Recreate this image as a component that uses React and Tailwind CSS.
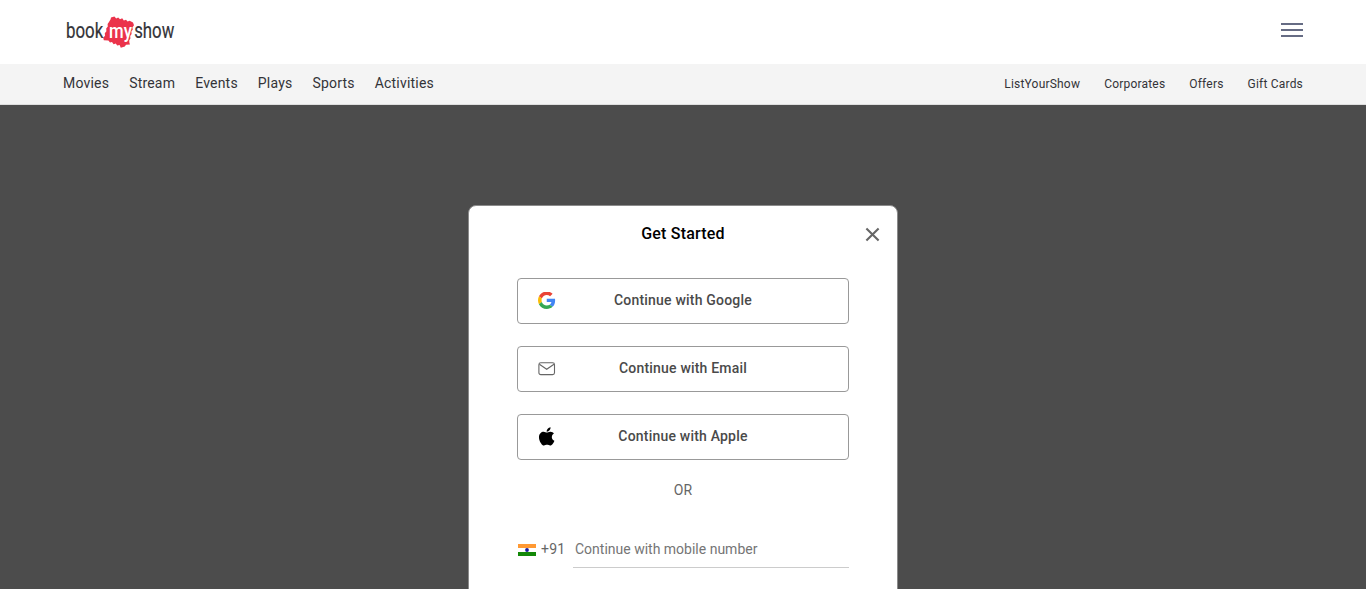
import React from "react";

const mainLinks = ["Movies", "Stream", "Events", "Plays", "Sports", "Activities"];
const sideLinks = ["ListYourShow", "Corporates", "Offers", "Gift Cards"];

function Logo() {
  return (
    <svg width="120" height="42" viewBox="0 0 120 42" className="block" fontFamily="Roboto, sans-serif">
      <path
        fill="#eb334b"
        d="M50.6 9.2L51 7.4l3.4-.8 1.8 2 2-1.2 1.8 1.8 2.2-1 1.6 2.4 2.2-.8 1.6 1.8 2-.8L73 12.6l1 2.6-1.6 2.2.4 2.2-1.4 2 .2 2.4-1.4 2 .2 2.4-1.2 2 .2 2.4.6 1.8-4 .2-1.2 1.8-4 1.2-1.2-2.8-2.4.6-1.4-2.2-2.2.8-1.6-2.2-2 .6-1.6-2-4.6-.4-.6-2.4 1.8-2-.2-2.6 1.6-2-.2-2.6 1.6-2-.2-2.6 1.4-2z"
      />
      <g fill="#333338" fontSize="21.5" stroke="#333338" strokeWidth=".2">
        <text transform="translate(6 28) scale(.785 1)">book</text>
        <text transform="translate(74.2 28) scale(.78 1)">show</text>
      </g>
      <text transform="translate(49 27.5) scale(.82 1)" fill="#fff" fontSize="20.5" fontWeight="500">my</text>
    </svg>
  );
}

function GoogleIcon() {
  return (
    <svg width="18" height="18" viewBox="0 1.4 49.4 49.4" className="shrink-0">
      <path fill="#EA4335" d="M24 9.5c3.54 0 6.71 1.22 9.21 3.6l6.85-6.85C35.9 2.38 30.47 0 24 0 14.62 0 6.51 5.38 2.56 13.22l7.98 6.19C12.43 13.72 17.74 9.5 24 9.5z" />
      <path fill="#4285F4" d="M46.98 24.55c0-1.57-.15-3.09-.38-4.55H24v9.02h12.94c-.58 2.96-2.26 5.48-4.78 7.18l7.73 6c4.51-4.18 7.09-10.36 7.09-17.65z" />
      <path fill="#FBBC05" d="M10.53 28.59c-.48-1.45-.76-2.99-.76-4.59s.27-3.14.76-4.59l-7.98-6.19C.92 16.46 0 20.12 0 24c0 3.88.92 7.54 2.56 10.78l7.97-6.19z" />
      <path fill="#34A853" d="M24 48c6.48 0 11.93-2.13 15.89-5.81l-7.73-6c-2.15 1.45-4.92 2.3-8.16 2.3-6.26 0-11.57-4.22-13.47-9.91l-7.98 6.19C6.51 42.62 14.62 48 24 48z" />
    </svg>
  );
}

function EmailIcon() {
  return (
    <svg width="18" height="18" viewBox="0 0 18 18" fill="none" stroke="#666" strokeWidth="1.1">
      <rect x=".9" y="2.8" width="15.6" height="11.8" rx="1.9" />
      <path d="M1.4 4.2l7.3 5.1L16 4.2" />
    </svg>
  );
}

function AppleIcon() {
  return (
    <svg width="18" height="18" viewBox="-20 50 440 440" fill="#000" className="overflow-visible">
      <path d="M318.7 268.7c-.2-36.7 16.4-64.4 50-84.8-18.8-26.9-47.2-41.7-84.7-44.6-35.5-2.8-74.3 20.7-88.5 20.7-15 0-49.4-19.7-76.4-19.7C63.3 141.2 4 184.8 4 273.5q0 39.3 14.4 81.2c12.8 36.7 59 126.7 107.2 125.2 25.2-.6 43-17.9 75.8-17.9 31.8 0 48.3 17.9 76.4 17.9 48.6-.7 90.4-82.5 102.6-119.3-65.2-30.7-61.7-90-61.7-91.9zm-56.6-164.2c27.3-32.4 24.8-61.9 24-72.5-24.1 1.4-52 16.4-67.9 34.9-17.5 19.8-27.8 44.3-25.6 71.9 26.1 2 49.9-11.4 69.5-34.3z" />
    </svg>
  );
}

function IndiaFlag() {
  return (
    <svg width="18" height="12" viewBox="0 0 18 12" className="block shrink-0">
      <rect width="18" height="12" fill="#fff" />
      <rect width="18" height="4" fill="#ff9933" />
      <rect y="8" width="18" height="4" fill="#138808" />
      <circle cx="9" cy="6" r="1.9" fill="#1a1a9c" />
    </svg>
  );
}

function ProviderButton({ icon, label }) {
  return (
    <button className="grid h-[46px] w-full grid-cols-[18px_1fr_18px] items-center rounded-[4px] border border-[#999] bg-white px-5">
      <span className="mb-px flex size-[18px] items-center justify-center">{icon}</span>
      <span className="pb-0.5 text-center text-[14px] leading-5 font-medium tracking-[0.2px] text-[#4a4a4a]">{label}</span>
    </button>
  );
}

export default function App() {
  return (
    <div className="flex h-screen flex-col overflow-hidden bg-[#4c4c4c] font-['Roboto',sans-serif]">
      <header className="flex h-16 shrink-0 items-start justify-between bg-white pt-2.5 pr-[63px] pl-[60px]">
        <Logo />
        <button aria-label="Menu" className="mt-[13px] flex w-[22px] flex-col gap-1">
          <span className="h-0.5 bg-[#666c84]" />
          <span className="h-0.5 bg-[#666c84]" />
          <span className="h-0.5 bg-[#666c84]" />
        </button>
      </header>
      <nav className="flex h-[41px] shrink-0 items-center justify-between border-b border-[#dedede] bg-[#f4f4f4] px-[63px] pb-0.5 text-[#333338]">
        <div className="flex gap-5 text-[14px] tracking-[0.2px]">
          {mainLinks.map((l) => <a key={l}>{l}</a>)}
        </div>
        <div className="flex gap-6 pt-0.5 text-[12px] tracking-[0.2px]">
          {sideLinks.map((l) => <a key={l}>{l}</a>)}
        </div>
      </nav>
      <main className="flex min-h-0 flex-1 justify-center pt-[100px]">
        <section className="h-[600px] w-[430px] shrink-0 rounded-[8px] border border-[#8b8b8b] bg-white px-12">
          <div className="grid h-[72px] grid-cols-[1fr_auto_1fr] items-start pt-4">
            <span />
            <h2 className="text-[16px] leading-6 font-medium tracking-[0.2px] text-black">Get Started</h2>
            <button aria-label="Close" className="mt-[5px] -mr-[31px] justify-self-end">
              <svg width="15" height="15" viewBox="0 0 15 15" stroke="#666" strokeWidth="2.1" className="block">
                <path d="M1.4 1.4l12.2 12.2M13.6 1.4L1.4 13.6" />
              </svg>
            </button>
          </div>
          <div className="flex flex-col gap-[22px]">
            <ProviderButton icon={<GoogleIcon />} label="Continue with Google" />
            <ProviderButton icon={<EmailIcon />} label="Continue with Email" />
            <ProviderButton icon={<AppleIcon />} label="Continue with Apple" />
          </div>
          <p className="mt-5 text-center text-[14px] leading-5 text-[#666]">OR</p>
          <div className="mt-8 flex h-9 justify-between text-[14px] text-[#666]">
            <div className="flex h-9 items-center gap-[5px] pl-px">
              <IndiaFlag />
              <span className="pb-0.5 tracking-[0.2px]">+91</span>
            </div>
            <div className="flex h-9 w-[276px] items-center border-b border-[#ccc] pl-0.5">
              <span className="text-[#757575]">Continue with mobile number</span>
            </div>
          </div>
        </section>
      </main>
    </div>
  );
}
